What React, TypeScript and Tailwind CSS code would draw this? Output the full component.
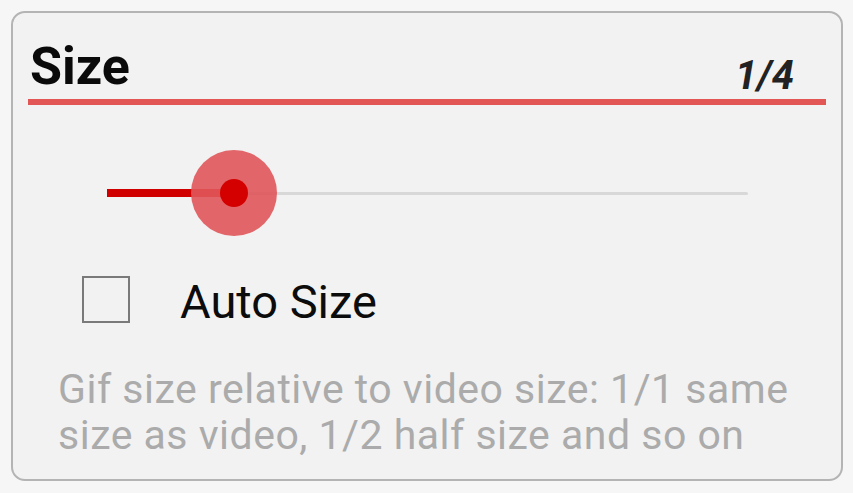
export default function App() {
  return (
    <div className="h-[493px] w-[853px] bg-[#f6f6f6] p-[11px] font-['Roboto',sans-serif]">
      <div className="flex h-[470px] w-[832px] flex-col rounded-[14px] border-2 border-[#b4b4b4] bg-[#f2f2f2] px-[15px]">
        {/* Header */}
        <div className="mt-[22px] flex h-[64px] items-end justify-between pl-[2px] pr-[32px]">
          <h2 className="text-[52px] font-bold leading-[64px] text-[#0a0a0a]">Size</h2>
          <span className="mb-[3px] text-[40px] font-bold italic leading-[40px] text-[#222]">1/4</span>
        </div>
        <div className="h-[6px] w-[798px] bg-[#e25656]" />

        {/* Slider */}
        <div className="relative ml-[77px] mt-[45px] h-[86px] w-[643px]">
          <div className="absolute left-[128px] right-0 top-[42px] h-[3px] rounded-full bg-[#d8d8d8]" />
          <div className="absolute left-[2px] top-[39px] h-[8px] w-[128px] bg-[#d10000]" />
          <div className="absolute left-[86px] top-0 h-[86px] w-[86px] rounded-full bg-[#e0575a]/90" />
          <div className="absolute left-[115px] top-[29px] h-[28px] w-[28px] rounded-full bg-[#d40000]" />
        </div>

        {/* Checkbox */}
        <div className="mt-[36px] flex items-start pl-[54px]">
          <div className="mt-[4px] h-[47px] w-[48px] border-2 border-[#7a7a7a] bg-[#f2f2f2]" />
          <span className="ml-[50px] pt-[2px] text-[47px] leading-[56px] text-[#0c0c0c]">Auto Size</span>
        </div>

        {/* Description */}
        <p className="mt-[36px] pl-[30px] text-[41px] leading-[46px] tracking-[0.5px] text-[#ababab]">
          Gif size relative to video size: 1/1 same
          <br />
          size as video, 1/2 half size and so on
        </p>
      </div>
    </div>
  );
}
